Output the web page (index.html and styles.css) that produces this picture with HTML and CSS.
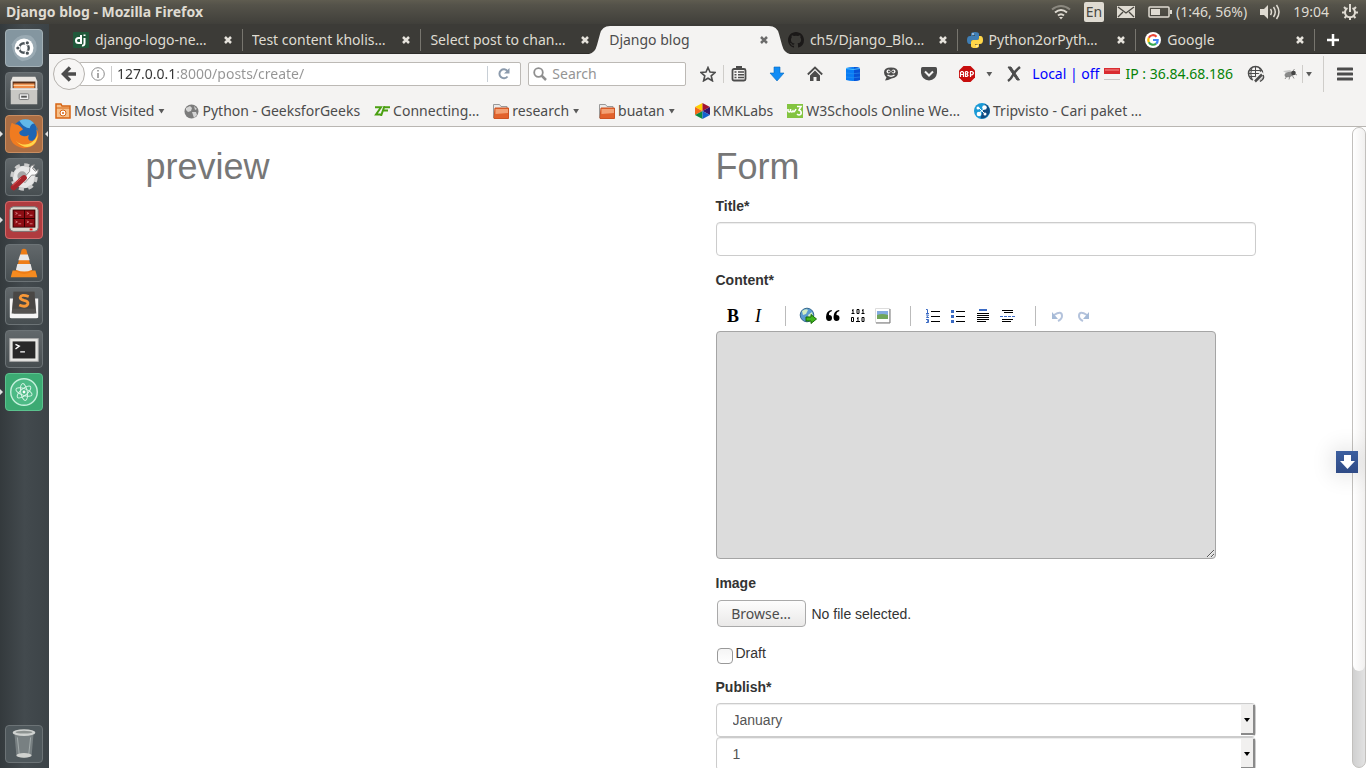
FILE: index.html
```html
<!DOCTYPE html>
<html lang="en">
<head>
<meta charset="utf-8">
<title>Django blog</title>
<link rel="stylesheet" href="styles.css">
</head>
<body>
<div class="desktop">
  <header class="panel">
    <strong class="panel-title">Django blog - Mozilla Firefox</strong>
    <div class="indicators">
      <svg width="20" height="16" viewBox="0 0 20 16" fill="none" stroke-width="2"><path d="M1 5.500Q10-1.500 19 5.500" stroke="#8b887f"/><path d="M4 8.500Q10 3.500 16 8.500M7 11.500Q10 9 13 11.500" stroke="#dfdbd2"/><path d="M8 13h4l-2 2.500z" fill="#dfdbd2"/></svg>
      <span class="lang">En</span>
      <svg width="18" height="12" viewBox="0 0 18 12"><path d="M0 0h18v12H0z" fill="#dfdbd2"/><path d="M1 1l8 6 8-6M1 11l5-5M17 11l-5-5" fill="none" stroke="#4a4842" stroke-width="1.300"/></svg>
      <span class="battery"><svg width="24" height="12" viewBox="0 0 24 12"><rect x="1" y="1" width="20" height="10" rx="1" fill="none" stroke="#dfdbd2" stroke-width="1.500"/><path d="M3 3h9v6H3zM22 4h2v4h-2z" fill="#dfdbd2"/></svg>(1:46, 56%)</span>
      <svg width="20" height="16" viewBox="0 0 20 16"><path d="M0 5h4l4-4v14l-4-4H0z" fill="#dfdbd2"/><path d="M10.500 5q2 3 0 6M13.500 3q3.500 5 0 10M16.500 1q5 7 0 14" fill="none" stroke="#dfdbd2" stroke-width="1.500"/></svg>
      <time>19:04</time>
      <svg width="16" height="16" viewBox="0 0 16 16" fill="none" stroke="#dfdbd2" stroke-width="2"><path d="M5.500 4a5 5 0 1 0 5 0"/><path d="M8 0v8"/><path d="M0 8.500h3M13 8.500h3M2 3l2 2M14 3l-2 2M2.500 14l2-2M13.500 14l-2-2M8 13v3"/></svg>
    </div>
  </header>

  <nav class="launcher" aria-label="Launcher">
    <button class="tile dash" aria-label="Search"><svg viewBox="0 0 38 38"><path d="M6 15Q12 3 26 6q8 5 6 16-3 10-15 11Q7 29 6 15z" fill="#a8b8bf" opacity=".6"/><circle cx="19" cy="19" r="10" fill="#fff"/><circle cx="19" cy="19" r="5" fill="none" stroke="#4b5358" stroke-width="2.500"/><g fill="#4b5358" stroke="#fff" stroke-width="1.200"><circle cx="12.500" cy="19" r="2.300"/><circle cx="22.500" cy="13.500" r="2.300"/><circle cx="22.500" cy="24.500" r="2.300"/></g></svg></button>
    <button class="tile" aria-label="Files"><svg viewBox="0 0 38 38"><path d="M7 4h24l2 5v9H5V9z" fill="#e8e5e0"/><path d="M7 9h24v8H7z" fill="#5b3119"/><path d="M8 11h22v5H8z" fill="#ee8b47"/><path d="M8 13h22" stroke="#ffe6bf"/><path d="M5 16h28v17H5z" fill="#c9c8c4"/><path d="M5 17h28" stroke="#fff"/><rect x="14" y="22" width="10" height="6" rx="1" fill="#efefef" stroke="#777"/><path d="M16 25h6" stroke="#555" stroke-width="2"/></svg></button>
    <button class="tile firefox running focused" aria-label="Firefox"><svg viewBox="0 0 38 38"><circle cx="20" cy="18" r="14" fill="#1d65b4"/><path d="M14 5q10-4 16 3-4 0-5 5-6 0-11-8z" fill="#61b8e9"/><path d="M6 7q3 2 6 2 3 1 6 5l-4 3q0 4 4 4 3 1 6-1-2 7 4 6 6-3 4-12 3 3 2 8-3 13-16 12Q3 31 4 17q0-5 2-10z" fill="#f07b20"/><path d="M31 9q6 12-4 19-8 5-17-2 10 10 18 5Q37 24 31 9z" fill="#ffd54a"/></svg></button>
    <button class="tile" aria-label="System Settings"><svg viewBox="0 0 38 38"><circle cx="19" cy="19" r="12" fill="#dedede" stroke="#cbcbcb" stroke-width="5" stroke-dasharray="5 4.400"/><circle cx="19" cy="19" r="11" fill="#e7e7e7"/><circle cx="17" cy="18" r="5" fill="#a5a5a5"/><path d="M17 22l8-9q-1-6 5-7l-2 4 3 3 3-2q0 7-7 6l-7 8z" fill="#fafafa" stroke="#888"/><path d="M8 30l11-10" stroke="#a8262c" stroke-width="6" stroke-linecap="round"/><path d="M7 28l9-8" stroke="#e05a5a"/></svg></button>
    <button class="tile terminator running" aria-label="Terminator"><svg viewBox="0 0 38 38"><rect x="4" y="5" width="30" height="26" rx="4" fill="#ddd9cf" stroke="#777"/><rect x="7" y="8" width="24" height="19" fill="#300"/><path d="M8 9h11v8H8zM20 9h10v8H20zM8 18h11v8H8zM20 18h10v8H20z" fill="#8d0d13"/><path d="M10 11l2 1-2 1M13 14h3M22 11l2 1-2 1M25 14h3M10 20l2 1-2 1M13 23h3M22 20l2 1-2 1M25 23h3" fill="none" stroke="#e89a9a" stroke-width=".8"/><path d="M25 29h3" stroke="#e11" stroke-width="2"/></svg></button>
    <button class="tile" aria-label="VLC"><svg viewBox="0 0 38 38"><path d="M7 27h24l2 7H5z" fill="#f68b1f"/><path d="M16.500 5q2.500-2 5 0l6 23q-8 5-17 0z" fill="#ef7d15"/><path d="M15 10h8l2 6H13zM12 20h14l1.500 6q-8 4-17 0z" fill="#e8e8e8"/></svg></button>
    <button class="tile" aria-label="Sublime Text"><svg viewBox="0 0 38 38"><path d="M4 11h4v16h22V11h4v20q0 1-2 1H6q-2 0-2-1z" fill="#f5f5f5"/><path d="M8 4h22l2 23H6z" fill="#555351"/><path d="M8 4h22l1 18H7z" fill="#494745"/><path d="M24 9q-8-3-9 1 0 2 4 3 5 1 4 4-2 4-9 1" fill="none" stroke="#f79838" stroke-width="3"/></svg></button>
    <button class="tile" aria-label="Terminal"><svg viewBox="0 0 38 38"><rect x="4" y="8" width="30" height="24" fill="#e8e8e5" stroke="#aaa"/><rect x="7" y="11" width="24" height="18" fill="#292929"/><path d="M10 14l4 2-4 3M15 22h5" fill="none" stroke="#fff" stroke-width="1.500"/></svg></button>
    <button class="tile atom running" aria-label="Atom"><svg viewBox="0 0 38 38"><circle cx="19" cy="19" r="14" fill="#4dba86" stroke="#c5f0dc" stroke-width="1.500"/><g fill="none" stroke="#d8f5e7"><ellipse cx="19" cy="19" rx="9" ry="3.500" transform="rotate(20 19 19)"/><ellipse cx="19" cy="19" rx="9" ry="3.500" transform="rotate(80 19 19)"/><ellipse cx="19" cy="19" rx="9" ry="3.500" transform="rotate(140 19 19)"/></g><circle cx="19" cy="19" r="1.500" fill="#fff"/></svg></button>
    <button class="tile trash" aria-label="Trash"><svg viewBox="0 0 38 38"><path d="M9 9h20l-2 23q-8 3-16 0z" fill="#858d8f" opacity=".75"/><path d="M12 12l2 18M26 12l-2 18" stroke="#a5adae"/><ellipse cx="19" cy="7" rx="12" ry="3.500" fill="#cfd2d0"/><ellipse cx="19" cy="6.500" rx="9" ry="1.500" fill="#8d9391"/><ellipse cx="19" cy="31" rx="8" ry="2.500" fill="#d0d2cf"/></svg></button>
  </nav>

  <div class="browser">
    <div class="tabs">
      <div class="tab"><svg width="16" height="16" viewBox="0 0 16 16"><rect width="16" height="16" rx="1" fill="#20583a"/><path d="M8 3v8H5.500Q3 11 3 8.500T5.500 6H8M11.500 6v5q0 3-2.500 2.500M11.500 2.500V4" fill="none" stroke="#fff" stroke-width="2"/></svg><span class="tab-name">django-logo-ne…</span><button class="close" aria-label="Close tab"><svg width="10" height="10" viewBox="0 0 10 10"><path d="M2 2l6 6M8 2L2 8"/></svg></button></div>
      <div class="tab"><span class="tab-name">Test content kholis…</span><button class="close" aria-label="Close tab"><svg width="10" height="10" viewBox="0 0 10 10"><path d="M2 2l6 6M8 2L2 8"/></svg></button></div>
      <div class="tab before-active"><span class="tab-name">Select post to chan…</span><button class="close" aria-label="Close tab"><svg width="10" height="10" viewBox="0 0 10 10"><path d="M2 2l6 6M8 2L2 8"/></svg></button></div>
      <div class="tab active"><svg class="curve curve-left" width="24" height="28" viewBox="0 0 24 28"><path d="M0 28Q6 27 8 19L11 8Q13 0 21 0H24V28z" fill="#f4f3f2"/></svg><svg class="curve curve-right" width="24" height="28" viewBox="0 0 24 28"><path d="M24 28Q18 27 16 19L13 8Q11 0 3 0H0V28z" fill="#f4f3f2"/></svg><span class="tab-name">Django blog</span><button class="close" aria-label="Close tab"><svg width="10" height="10" viewBox="0 0 10 10"><path d="M2 2l6 6M8 2L2 8"/></svg></button></div>
      <div class="tab"><svg width="16" height="16" viewBox="0 0 16 16"><path fill="#1b1918" d="M8 0C3.580 0 0 3.580 0 8c0 3.540 2.290 6.530 5.470 7.590.4.070.550-.17.550-.38v-1.500c-2.010.37-2.530-.49-2.690-.94-.09-.23-.48-.94-.82-1.130-.28-.15-.68-.52-.01-.53.63-.01 1.080.58 1.230.82.72 1.210 1.870.87 2.330.66.070-.52.280-.87.510-1.070-1.780-.2-3.640-.89-3.640-3.950 0-.87.310-1.590.82-2.150-.08-.2-.36-1.020.08-2.120 0 0 .67-.21 2.200.82a7.600 7.600 0 0 1 4 0c1.530-1.040 2.200-.82 2.200-.82.440 1.100.160 1.920.080 2.120.510.560.820 1.270.820 2.150 0 3.070-1.870 3.750-3.650 3.950.290.250.540.730.540 1.480v2.200c0 .210.150.460.550.380A8 8 0 0 0 16 8c0-4.420-3.580-8-8-8z"/></svg><span class="tab-name">ch5/Django_Blo…</span><button class="close" aria-label="Close tab"><svg width="10" height="10" viewBox="0 0 10 10"><path d="M2 2l6 6M8 2L2 8"/></svg></button></div>
      <div class="tab"><svg width="16" height="16" viewBox="0 0 16 16"><path d="M4 4V2q0-2 4-2t4 2v4q0 2-2 2H6Q4 8 4 10v2H2.500Q0 12 0 8t3-4h5V3.300z" fill="#3f7eb4"/><path d="M12 12v2q0 2-4 2t-4-2v-4q0-2 2-2h4q2 0 2-2V4h1.500Q16 4 16 8t-3 4H8v.7z" fill="#ffd648"/><circle cx="6" cy="2" r=".8" fill="#fff"/><circle cx="10" cy="14" r=".8" fill="#fff"/></svg><span class="tab-name">Python2orPyth…</span><button class="close" aria-label="Close tab"><svg width="10" height="10" viewBox="0 0 10 10"><path d="M2 2l6 6M8 2L2 8"/></svg></button></div>
      <div class="tab"><svg width="16" height="16" viewBox="0 0 16 16"><circle cx="8" cy="8" r="8" fill="#fff"/><g fill="none" stroke-width="2.200"><path d="M11.500 4.700A4.800 4.800 0 0 0 3.800 5.800" stroke="#ea4335"/><path d="M3.800 5.800a4.800 4.800 0 0 0 0 4.400" stroke="#fbbc05"/><path d="M3.800 10.200a4.800 4.800 0 0 0 7.300 1.400" stroke="#34a853"/><path d="M11.100 11.600Q12.800 10.300 12.700 8H8" stroke="#4285f4"/></g></svg><span class="tab-name">Google</span><button class="close" aria-label="Close tab"><svg width="10" height="10" viewBox="0 0 10 10"><path d="M2 2l6 6M8 2L2 8"/></svg></button></div>
      <button class="new-tab" aria-label="New tab"><svg width="12" height="12" viewBox="0 0 12 12"><path d="M6 0v12M0 6h12" stroke="#fff" stroke-width="2.500"/></svg></button>
    </div>

    <div class="toolbar">
      <div class="location">
        <button class="back" aria-label="Back"><svg width="16" height="16" viewBox="0 0 16 16"><path d="M9 1.500L2.500 8 9 14.500M3 8h12" fill="none" stroke="#4c4c4c" stroke-width="3.500"/></svg></button>
        <div class="url-box">
          <svg width="14" height="14" viewBox="0 0 14 14"><circle cx="7" cy="7" r="6.300" fill="none" stroke="#8b8b8b"/><path d="M7 6v5M7 3v1.500" stroke="#8b8b8b" stroke-width="1.500"/></svg>
          <input class="url" type="text" aria-label="Address" value="127.0.0.1:8000/posts/create/">
          <button class="reload" aria-label="Reload"><svg width="12" height="12" viewBox="0 0 12 12"><path d="M9.500 8.500A4.500 4.500 0 1 1 9.500 3" fill="none" stroke="#8b9aac" stroke-width="2"/><path d="M11.500 0v5.500H6z" fill="#8b9aac"/></svg></button>
        </div>
      </div>
      <div class="search-box">
        <svg width="14" height="14" viewBox="0 0 14 14" fill="none" stroke="#8f8f8f"><circle cx="5.500" cy="5.500" r="4.300" stroke-width="1.800"/><path d="M8.500 8.500L13 13" stroke-width="2.500"/></svg>
        <input class="search" type="text" placeholder="Search" aria-label="Search">
      </div>
      <div class="pair">
        <button aria-label="Bookmark"><svg width="16" height="16" viewBox="0 0 16 16"><path d="M8 1.500l2 4.500 5 .5-3.800 3.300 1.200 5L8 12.200l-4.400 2.600 1.200-5L1 6.500 6 6z" fill="none" stroke="#4c4c4c" stroke-width="1.600"/></svg></button>
        <i class="divider"></i>
        <button aria-label="Bookmarks list"><svg width="16" height="16" viewBox="0 0 16 16"><rect x="1.500" y="3" width="13" height="11.500" rx="1.500" fill="none" stroke="#4c4c4c" stroke-width="1.800"/><path d="M5 0h6v4H5z" fill="#4c4c4c"/><path d="M3.500 6h2M7 6h6M3.500 8.700h2M7 8.700h6M3.500 11.500h2M7 11.500h6" stroke="#4c4c4c" stroke-width="1.500"/></svg></button>
      </div>
      <div class="tools">
        <button aria-label="Downloads"><svg width="16" height="16" viewBox="0 0 16 16"><path d="M5 1h6v6h4l-7 8-7-8h4z" fill="#118cf5" stroke="#0768bd" stroke-width=".6"/></svg></button>
        <button aria-label="Home"><svg width="16" height="16" viewBox="0 0 16 16"><path d="M.8 8.500L8 1.500l7.200 7" fill="none" stroke="#4c4c4c" stroke-width="1.800"/><path d="M8 4.500l5 5V15h-3.500v-4h-3v4H3V9.500z" fill="#4c4c4c"/></svg></button>
        <button aria-label="Database"><svg width="16" height="16" viewBox="0 0 16 16"><path d="M1 2q7-2 14 0v12q-7 2-14 0z" fill="#087cf5"/><path d="M9 1q4 0 6 1v12q-3 1-6 1z" fill="#0751d5"/><path d="M1 2.500q7 2 14 0" fill="none" stroke="#4bc0ff"/><path d="M1 7q7 1.500 14 0M1 11q7 1.500 14 0" fill="none" stroke="#2d93f0" stroke-width=".6"/></svg></button>
        <button aria-label="Chat"><svg width="16" height="16" viewBox="0 0 16 16"><path d="M8 1.500q7 0 7 5T8.500 12.500Q5 14.500 2 14.500l1.500-3Q1 9.500 1 6.500q0-5 7-5z" fill="#4c4c4c"/><circle cx="5.500" cy="5.500" r="2" fill="#f4f3f2"/><circle cx="10.500" cy="5.500" r="2" fill="#f4f3f2"/><circle cx="6" cy="5.500" r=".9" fill="#333"/><circle cx="10" cy="5.500" r=".9" fill="#333"/><path d="M4.500 9q3.500 2.500 7 0" fill="none" stroke="#f4f3f2" stroke-width="1.300"/></svg></button>
        <button aria-label="Pocket"><svg width="16" height="16" viewBox="0 0 16 16"><path d="M1.500 1h13Q16 1 16 2.500V7q-1 7-8 7.500Q1 14 0 7V2.500Q0 1 1.500 1z" fill="#4c4c4c"/><path d="M4 5.500l4 4 4-4" fill="none" stroke="#f4f3f2" stroke-width="2"/></svg></button>
        <button aria-label="Adblock Plus"><svg width="16" height="16" viewBox="0 0 16 16"><path d="M4.500 0h7L16 4.500v7L11.500 16h-7L0 11.500v-7z" fill="#c70d0d"/><path d="M1.500 11V6.500l1-1h1l1 1V11M1.500 8.500h3M6.500 5.500V10.500h1.500l1-1-1-1.500H6.500M6.500 5.500H8l1 1L8 8M11.500 11V5.500H13l1.300 1v1.300l-1.300 1h-1.500" fill="none" stroke="#fff" stroke-width="1.200"/></svg></button>
      </div>
      <i class="caret"></i>
      <button class="proxy" aria-label="Proxy"><svg width="16" height="16" viewBox="0 0 16 16"><path d="M2 1h3l8.500 13H11z" fill="#4c4c4c" stroke="#4c4c4c"/><path d="M14 1Q9 5 7 9q-2 4-5 6" fill="none" stroke="#4c4c4c" stroke-width="2.500"/></svg></button>
      <span class="proxy-state">Local | off</span>
      <svg class="flag" width="16" height="12" viewBox="0 0 16 12"><path d="M0 0h16v6H0z" fill="#d92b31"/><path d="M0 6h16v6H0z" fill="#f4f4f4"/><path d="M0 11.500h16" stroke="#c8c8c8"/><path d="M1 1h14v2H1z" fill="#f08080" opacity=".6"/></svg>
      <span class="ip">IP : 36.84.68.186</span>
      <button class="globe" aria-label="Network"><svg width="18" height="18" viewBox="0 0 18 18"><circle cx="8.500" cy="8.500" r="7" fill="none" stroke="#4c4c4c" stroke-width="1.500"/><path d="M2 5.500h13M1.500 8.500h14M2 11.500h10M8.500 1.500v14M5 2.500q-2.500 6 0 12M12 2.500q1.500 2 1.500 5" fill="none" stroke="#4c4c4c"/><path d="M7 17l9-9" stroke="#f4f3f2" stroke-width="5"/><path d="M8 16.500l7-7" stroke="#4c4c4c" stroke-width="2.500"/><path d="M16 10q1.500 3-1 5l-2 1.500" fill="none" stroke="#4c4c4c" stroke-width="1.500"/></svg></button>
      <button class="bug" aria-label="Firebug"><svg width="16" height="16" viewBox="0 0 16 16"><path d="M1 5l7-1 4 3-5 2z" fill="#c9c9c9"/><ellipse cx="7" cy="8.500" rx="4.500" ry="2.500" fill="#888" transform="rotate(-15 7 8.500)"/><circle cx="11.500" cy="7" r="2.300" fill="#444"/><path d="M5 10l-2 3M8 10l-1 3.500M10 9l2 3.500M11 5l1.500-2M13 8l2 1" stroke="#777" stroke-width=".8"/></svg></button>
      <i class="divider"></i>
      <i class="caret near"></i>
      <i class="divider tall"></i>
      <button class="menu" aria-label="Menu"><svg width="16" height="14" viewBox="0 0 16 14"><path d="M1 2h14M1 7h14M1 12h14" stroke="#4c4c4c" stroke-width="3" stroke-linecap="round"/></svg></button>
    </div>

    <nav class="bookmarks" aria-label="Bookmarks">
      <a class="has-menu" href="#"><svg width="16" height="16" viewBox="0 0 16 16"><path d="M1 1h5l1 2h8v12H1z" fill="#f6c08a" stroke="#d66413" stroke-width="1.500"/><path d="M1 5h14" stroke="#d66413"/><circle cx="8" cy="10" r="3" fill="#fff" stroke="#d66413"/><circle cx="8" cy="10" r="1" fill="#d66413"/></svg>Most Visited<i class="caret"></i></a>
      <a href="#"><svg width="15" height="15" viewBox="0 0 15 15"><circle cx="7.500" cy="7.500" r="7" fill="#7c7c7c"/><path d="M2 4l4-2 2 2-1 3-3 1-2-2zM8 8l4 0 1 3-3 3-1-3zM10 2l3 3-2 1z" fill="#d4d4d4"/></svg>Python - GeeksforGeeks</a>
      <a href="#"><svg width="16" height="10" viewBox="0 0 16 10"><path d="M1 1.200h6L2 8.500h5M10 1.200h6M9 4.500h5M10.500 0L7 10" fill="none" stroke="#4aa011" stroke-width="2"/></svg>Connecting…</a>
      <a class="has-menu" href="#"><svg width="16" height="15" viewBox="0 0 16 15"><path d="M.5 14V.5h6l1.500 2h6V4" fill="#e9e9e9" stroke="#999"/><path d="M2 4h13.500v10.500H1z" fill="#e2622c" stroke="#cd5423"/><path d="M2.500 5H15v4l-12.500 1z" fill="#f3a174"/></svg>research<i class="caret"></i></a>
      <a class="has-menu" href="#"><svg width="16" height="15" viewBox="0 0 16 15"><path d="M.5 14V.5h6l1.500 2h6V4" fill="#e9e9e9" stroke="#999"/><path d="M2 4h13.500v10.500H1z" fill="#e2622c" stroke="#cd5423"/><path d="M2.500 5H15v4l-12.500 1z" fill="#f3a174"/></svg>buatan<i class="caret"></i></a>
      <a href="#"><svg width="15" height="16" viewBox="0 0 15 16"><path d="M7.500 8V0L0 4z" fill="#ffd000"/><path d="M7.500 8V0L15 4z" fill="#a3132f"/><path d="M7.500 8L0 4v8z" fill="#f26a1b"/><path d="M7.500 8L15 4v8z" fill="#34146f"/><path d="M7.500 8L0 12l7.500 4z" fill="#098a41"/><path d="M7.500 8l7.500 4-7.500 4z" fill="#1261ce"/></svg>KMKLabs</a>
      <a href="#"><svg width="16" height="14" viewBox="0 0 16 14"><path d="M0 0h16v14H0z" fill="#83c440"/><path d="M1 5v2q1 2 2.500 0V5v2q1 2 2.500 0 1 2 3-2M10 2.500h4L12 6q3 1 2 4-2 2-4 0" fill="none" stroke="#fff" stroke-width="1.600"/></svg>W3Schools Online We…</a>
      <a href="#"><svg width="16" height="16" viewBox="0 0 16 16"><circle cx="8" cy="8" r="8" fill="#1b9ad6"/><path d="M11 1q6 3 4.500 9-3 6-9 5.500z" fill="#124b80"/><path d="M4 11l7-6M5 5l6 6" stroke="#fff"/><g fill="#fff"><circle cx="10.500" cy="4.500" r="2.300"/><circle cx="4" cy="5" r="1.500"/><circle cx="5" cy="11" r="2.300"/><circle cx="11" cy="11" r="1.500"/></g></svg>Tripvisto - Cari paket …</a>
    </nav>

    <div class="viewport">
      <main class="page">
        <section class="column"><h1>preview</h1></section>
        <section class="column">
          <h1>Form</h1>
          <form>
            <div class="group">
              <label class="name" for="title">Title*</label>
              <input class="control" id="title" type="text">
            </div>
            <div class="group">
              <label class="name" for="content">Content*</label>
              <div class="editor-bar">
                <div class="button-set">
                  <button type="button" class="bold" aria-label="Strong">B</button>
                  <button type="button" class="italic" aria-label="Emphasis">I</button>
                </div>
                <div class="button-set">
                  <button type="button" aria-label="Hyperlink"><svg width="18" height="18" viewBox="0 0 18 18"><circle cx="8" cy="8" r="6.800" fill="#5a9bd2" stroke="#36698f"/><path d="M3 4q4-3 6-1L7 7 4 8zM9 8l4-3 1 4-4 3z" fill="#d2edc4"/><path d="M7 10h5V7.500l5.500 4.500-5.500 4.500V14H7z" fill="#42b51b" stroke="#166b0b"/></svg></button>
                  <button type="button" aria-label="Blockquote"><svg width="14" height="12" viewBox="0 0 14 12"><path d="M6 1Q2.500 2 3 5q3 0 3 3t-3 3-3-4Q0 1 5.500 0zM13.500 1q-3.500 1-3 4 3 0 3 3t-3 3-3-4q0-6 5.500-7z"/></svg></button>
                  <button type="button" aria-label="Code sample"><svg width="14" height="14" viewBox="0 0 14 14" fill="none" stroke="#000"><path d="M.5 4.500h3M2 0v4M1 1.500h1M6 .5h2v4H6zM10.500 4.500h3M12 0v4M11 1.500h1M.5 8.500h2v4h-2zM5 12.500h4M7 8v4M6 9.500h1M11 8.500h2v4h-2z"/></svg></button>
                  <button type="button" aria-label="Image"><svg width="16" height="16" viewBox="0 0 16 16"><path d="M.5.5h14v14H.5z" fill="#fff" stroke="#ddd"/><path d="M15 1v14H1" fill="none" stroke="#777"/><path d="M2 3h11v4H2z" fill="#83abe0"/><path d="M2 7q5-2 11 0v4H2z" fill="#70a55a"/></svg></button>
                </div>
                <div class="button-set">
                  <button type="button" aria-label="Numbered list"><svg width="14" height="14" viewBox="0 0 14 14"><path d="M5 2.500h9M5 7.500h9M5 12.500h9" stroke="#000"/><path d="M0 .5h1.500V4M0 4.500h3M0 6h2.500L.5 8.500H3M0 10.500h2.500v1.500H1h1.500v1.500H0" fill="none" stroke="#3b6bc4"/></svg></button>
                  <button type="button" aria-label="Bulleted list"><svg width="14" height="14" viewBox="0 0 14 14"><path d="M5 2.500h9M5 7.500h9M5 12.500h9" stroke="#000"/><path d="M0 1h3v3H0zM0 6h3v3H0zM0 11h3v3H0z" fill="#3b6bc4"/></svg></button>
                  <button type="button" aria-label="Heading"><svg width="14" height="14" viewBox="0 0 14 14"><path d="M3 1h8" stroke="#3b6bc4" stroke-width="2"/><path d="M1 4.500h12M1 6.500h12M1 8.500h12M1 10.500h12M1 12.500h9" stroke="#000"/></svg></button>
                  <button type="button" aria-label="Horizontal rule"><svg width="16" height="14" viewBox="0 0 16 14"><path d="M2 1.500h11M4 3.500h9M2 10.500h11M2 12.500h9" stroke="#000"/><path d="M0 7.500h16" stroke="#3b6bc4" stroke-dasharray="3 1"/></svg></button>
                </div>
                <div class="button-set">
                  <button type="button" aria-label="Undo"><svg width="14" height="12" viewBox="0 0 14 12"><path d="M3 5q8-5 8 1 0 3-4 5" fill="none" stroke="#b4c3dc" stroke-width="2"/><path d="M1 2v7h6z" fill="#a5bad7"/></svg></button>
                  <button type="button" aria-label="Redo"><svg width="14" height="12" viewBox="0 0 14 12"><path d="M11 5Q3 0 3 6q0 3 4 5" fill="none" stroke="#b4c3dc" stroke-width="2"/><path d="M13 2v7H7z" fill="#a5bad7"/></svg></button>
                </div>
              </div>
              <textarea class="editor" id="content"></textarea>
            </div>
            <div class="group">
              <label class="name" for="image">Image</label>
              <div class="file"><label class="browse" for="image">Browse…</label><span>No file selected.</span><input id="image" type="file"></div>
            </div>
            <div class="draft"><input id="draft" type="checkbox"><label for="draft">Draft</label></div>
            <div class="group">
              <label class="name" for="month">Publish*</label>
              <div class="picker"><select class="control" id="month"><option>January</option></select><i class="arrow"></i></div>
              <div class="picker"><select class="control" aria-label="Day"><option>1</option></select><i class="arrow"></i></div>
            </div>
          </form>
        </section>
      </main>
      <div class="scrollbar"><div class="thumb"></div></div>
      <button class="jump" aria-label="Scroll to bottom"><svg width="16" height="16" viewBox="0 0 16 16"><path d="M5 1h7v6h4l-7.500 8L1 7h4z" fill="#fff"/></svg></button>
    </div>
  </div>
</div>
</body>
</html>
```
FILE: styles.css
```css
* { box-sizing: border-box; }

body {
  margin: 0;
  overflow: hidden;
  font: 14px/20px "Noto Sans", sans-serif;
  color: #4c4c4c;
}

button {
  padding: 0;
  border: 0;
  background: none;
  font: inherit;
  color: inherit;
}

svg { display: block; flex: none; }

.desktop {
  display: grid;
  grid-template: 24px minmax(0, 1fr) / 49px minmax(0, 1fr);
  height: 100vh;
}

/* Top panel */
.panel {
  grid-column: 1 / -1;
  display: flex;
  align-items: center;
  justify-content: space-between;
  padding: 0 8px 0 6px;
  background: linear-gradient(#5f5c50, #55534a 20%, #403f3a);
  color: #dfdbd2;
}

.indicators { display: flex; align-items: center; gap: 13px; }
.lang {
  width: 20px;
  border-radius: 2px;
  background: #dfdbd2;
  color: #4a4842;
  text-align: center;
}
.battery { display: flex; align-items: center; gap: 4px; }

/* Launcher */
.launcher {
  display: flex;
  flex-direction: column;
  align-items: center;
  gap: 5px;
  padding: 5px 1px 5px 0;
  background: linear-gradient(90deg, #343a3d, #434a4e 50%, #3c4347);
}
.tile {
  position: relative;
  flex: none;
  width: 38px;
  height: 38px;
  border: 1px solid #6c7376;
  border-radius: 4px;
  background: linear-gradient(#62686b, #474e51);
}
.tile svg { width: 36px; height: 36px; }
.dash { border-color: #a3b0b6; background: #8496a0; }
.firefox { border-color: #c98d61; background: #ab6e44; }
.terminator { border-color: #d26a6a; background: #b03c3f; }
.atom { border-color: #5bc28e; background: #3caa73; }
.trash { margin-top: auto; background: #4f585c; }
.running::before,
.focused::after {
  content: "";
  position: absolute;
  top: 15px;
  left: -6px;
  border: 3px solid transparent;
  border-left-color: #e0e0e0;
  border-right-width: 0;
}
.focused::after {
  left: auto;
  right: -6px;
  border-width: 3px 3px 3px 0;
  border-right-color: #e0e0e0;
}

/* Tabs */
.browser { display: flex; flex-direction: column; min-width: 0; min-height: 0; }
.tabs {
  display: flex;
  height: 30px;
  flex: none;
  padding-left: 15px;
  border-bottom: 1px solid #2d2c29;
  background: #3c3b37;
  color: #dfdbd2;
}
.tab {
  position: relative;
  display: flex;
  flex: 1;
  min-width: 0;
  align-items: center;
  gap: 6px;
  padding: 2px 10px 0 9px;
}
.tab::after {
  content: "";
  position: absolute;
  top: 5px;
  right: 0;
  width: 1px;
  height: 22px;
  background: #77756e;
}
.before-active::after,
.active::after { display: none; }
.tab-name { flex: 1; overflow: hidden; white-space: nowrap; }
.close { stroke: #e6e3dc; stroke-width: 2.500; }
.active { z-index: 1; color: #4c4c4c; }
.active .close { stroke: #6b6b6b; }
.active::before {
  content: "";
  position: absolute;
  z-index: -1;
  inset: 2px 10px -1px 12px;
  background: #f4f3f2;
}
.curve { position: absolute; z-index: -1; top: 2px; }
.curve-left { left: -11px; }
.curve-right { right: -11px; }
.new-tab { display: flex; width: 51px; align-items: center; padding: 3px 0 0 12px; }

/* Toolbar */
.toolbar {
  display: flex;
  height: 42px;
  flex: none;
  align-items: center;
  padding: 0 13px 2px 4px;
  background: #f4f3f2;
  white-space: nowrap;
}
.location { display: flex; flex: 1; align-items: center; }
.back {
  z-index: 1;
  display: grid;
  place-items: center;
  width: 32px;
  height: 32px;
  border: 1px solid #b5b2ae;
  border-radius: 50%;
  background: #f7f6f5;
}
.url-box,
.search-box {
  display: flex;
  height: 24px;
  align-items: center;
  border: 1px solid #bcb9b5;
  border-radius: 2px;
  background: #fff;
}
.url-box { flex: 1; margin-left: -6px; padding-left: 11px; }
.url {
  flex: 1;
  min-width: 0;
  height: 16px;
  margin-left: 6px;
  padding: 0 0 0 5px;
  border: 0;
  border-left: 1px solid #ccc;
  background: linear-gradient(90deg, #333 64px, #949494 64px) text;
  color: transparent;
  font: inherit;
  outline: 0;
}
.reload {
  display: grid;
  place-items: center;
  width: 33px;
  height: 16px;
  border-left: 1px solid #c8cfd6;
}
.search-box { width: 158px; margin-left: 7px; padding-left: 4px; gap: 5px; }
.search {
  min-width: 0;
  padding: 0;
  border: 0;
  font: inherit;
  outline: 0;
}
.search::placeholder { color: #949494; opacity: 1; }
.pair { display: flex; align-items: center; gap: 7px; margin-left: 14px; }
.divider { width: 1px; height: 18px; background: #cfcdca; }
.tall { height: 36px; }
.tools { display: flex; gap: 22px; margin: 0 10px 0 22px; }
.caret {
  width: 8px;
  height: 5px;
  background: #5a5a5a;
  clip-path: polygon(10% 0, 90% 0, 50% 100%);
}
.proxy { margin: 0 10px 0 13px; }
.proxy-state { color: #00f; }
.flag { margin: 0 5px; }
.ip { color: #068206; }
.globe { margin-left: 14px; }
.bug { margin: 0 4px 0 17px; }
.near { margin: 0 10px 0 2px; }
.menu { margin-left: 13px; }

/* Bookmarks */
.bookmarks {
  display: flex;
  height: 31px;
  flex: none;
  align-items: center;
  gap: 14px;
  padding: 0 6px;
  border-bottom: 1px solid #b9b6b2;
  background: #f4f3f2;
  white-space: nowrap;
}
.bookmarks a {
  display: flex;
  align-items: center;
  gap: 3px;
  color: inherit;
  text-decoration: none;
}
.bookmarks .has-menu { padding-right: 5px; }

/* Page */
.viewport {
  position: relative;
  display: flex;
  flex: 1;
  min-height: 0;
  overflow: hidden;
  background: #fff;
  color: #333;
  font-family: "Liberation Sans", Arial, sans-serif;
}
.page {
  display: grid;
  grid-template-columns: 1fr 1fr;
  flex: 1;
  max-width: 1140px;
  margin: 0 auto;
}
.column { padding: 0 15px; }
h1 {
  margin: 20px 0 9px;
  color: #777;
  font-size: 36px;
  font-weight: 400;
  line-height: 40px;
}
.group { margin-bottom: 14px; }
.name { display: block; margin-bottom: 6px; font-weight: 700; }
.control {
  display: block;
  width: 100%;
  height: 34px;
  padding: 6px 12px;
  border: 1px solid #ccc;
  border-radius: 4px;
  background: #fff;
  box-shadow: inset 0 1px 1px #00000013;
  color: #555;
  font: inherit;
}

.editor-bar { display: flex; height: 35px; align-items: center; padding: 4px 0 0 5px; }
.button-set { display: flex; padding-right: 14px; }
.button-set + .button-set { padding-left: 10px; border-left: 1px solid #bbb; }
.button-set button { display: grid; place-items: center; width: 25px; height: 20px; }
.bold,
.italic { color: #000; font-family: "Liberation Serif", serif; font-size: 18px; }
.bold { font-weight: 700; }
.italic { font-style: italic; }
.editor {
  display: block;
  width: 500px;
  max-width: 100%;
  height: 228px;
  border: 1px solid #a5a5a5;
  border-radius: 4px;
  background: #dcdcdc;
}

.file { position: relative; display: flex; align-items: center; gap: 6px; padding: 1px 0 2px 1px; }
.file input { position: absolute; width: 1px; height: 1px; opacity: 0; }
.browse {
  width: 89px;
  height: 27px;
  border: 1px solid #aaa;
  border-radius: 4px;
  background: linear-gradient(#fdfdfd, #eae9e8);
  color: #4c4c4c;
  font-family: "Noto Sans", sans-serif;
  line-height: 25px;
  text-align: center;
}
.draft { display: flex; gap: 3px; margin-bottom: 13px; padding-left: 1px; }
.draft input {
  width: 16px;
  height: 16px;
  margin: 5px 0 0;
  appearance: none;
  border: 1px solid #999;
  border-radius: 4px;
  background: linear-gradient(#f5f5f5, #fff);
}
.picker { position: relative; }
.picker select { padding: 0 16px; appearance: none; }
.arrow {
  position: absolute;
  top: 2px;
  right: 1px;
  bottom: 2px;
  width: 14px;
  border-right: 2px solid #8a8a8a;
  border-bottom: 2px solid #8a8a8a;
  background: #f1f0ef;
}
.arrow::after {
  content: "";
  position: absolute;
  top: 13px;
  left: 3px;
  border: 3px solid transparent;
  border-top: 4px solid #000;
}

.scrollbar {
  width: 14px;
  border: 1px solid #c2c0bd;
  border-radius: 7px;
  background: linear-gradient(90deg, #d0d0d0, #e2e2e2);
}
.thumb {
  height: 85%;
  border-radius: 7px;
  background: linear-gradient(90deg, #fff, #f1f0ef);
}
.jump {
  position: absolute;
  top: 324px;
  right: 8px;
  display: grid;
  place-items: center;
  width: 22px;
  height: 22px;
  background: linear-gradient(#3c5f9f, #2f4b86);
  box-shadow: 0 0 24px #00000030;
}
```
